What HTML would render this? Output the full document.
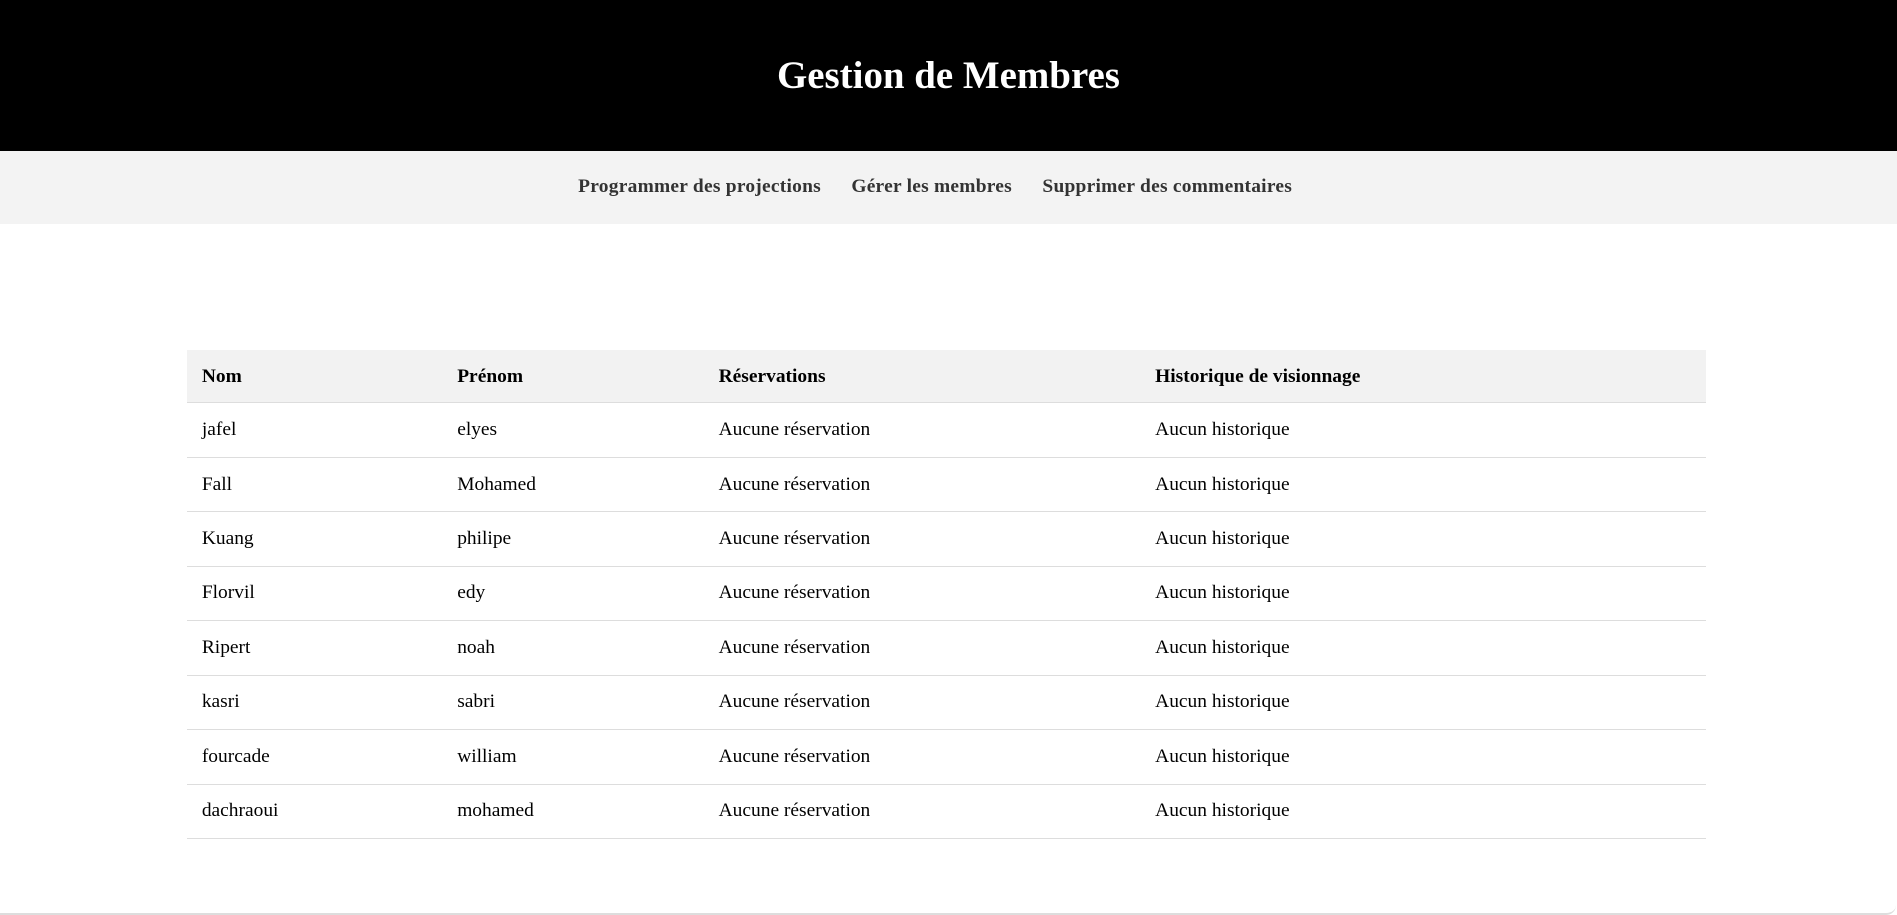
<!DOCTYPE html>
<html><head><meta charset="utf-8"><style>
html,body{margin:0;padding:0;background:#fff;}
body{width:1560px;height:752px;zoom:1.216;font-family:"Liberation Serif",serif;overflow:hidden;position:relative;}
header{background:#000;height:124px;display:flex;align-items:center;justify-content:center;}
header h1{color:#fff;margin:0;font-size:32px;font-weight:bold;}
nav{background:#f3f3f3;height:60px;display:flex;align-items:center;justify-content:center;gap:25px;padding-right:22px;}
nav a{color:#333;font-weight:bold;font-size:16px;text-decoration:none;letter-spacing:0.2px;}
table{position:absolute;left:154px;top:288px;width:1249px;border-collapse:collapse;font-size:16px;}
th,td{text-align:left;padding:12px 12px;line-height:20px;border-bottom:1px solid #ddd;}
th{background:#f2f2f2;font-weight:bold;line-height:19px;}
.frame{position:absolute;left:0;top:0;width:1559px;height:751px;border-bottom:2px solid #ddd;border-bottom-right-radius:8px;pointer-events:none;}
</style></head><body>
<header><h1>Gestion de Membres</h1></header>
<nav><a>Programmer des projections</a><a>Gérer les membres</a><a>Supprimer des commentaires</a></nav>
<table>
<colgroup><col style="width:210px"><col style="width:215px"><col style="width:359px"><col></colgroup>
<tr><th>Nom</th><th>Prénom</th><th>Réservations</th><th>Historique de visionnage</th></tr>
<tr><td>jafel</td><td>elyes</td><td>Aucune réservation</td><td>Aucun historique</td></tr>
<tr><td>Fall</td><td>Mohamed</td><td>Aucune réservation</td><td>Aucun historique</td></tr>
<tr><td>Kuang</td><td>philipe</td><td>Aucune réservation</td><td>Aucun historique</td></tr>
<tr><td>Florvil</td><td>edy</td><td>Aucune réservation</td><td>Aucun historique</td></tr>
<tr><td>Ripert</td><td>noah</td><td>Aucune réservation</td><td>Aucun historique</td></tr>
<tr><td>kasri</td><td>sabri</td><td>Aucune réservation</td><td>Aucun historique</td></tr>
<tr><td>fourcade</td><td>william</td><td>Aucune réservation</td><td>Aucun historique</td></tr>
<tr><td>dachraoui</td><td>mohamed</td><td>Aucune réservation</td><td>Aucun historique</td></tr>
</table>
<div class="frame"></div>
</body></html>
